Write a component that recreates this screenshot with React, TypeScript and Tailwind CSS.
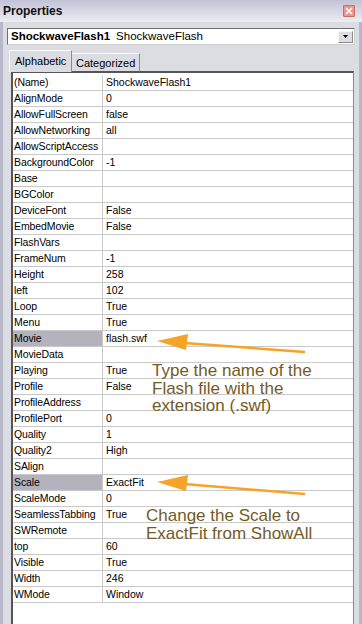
import React from 'react';

const rows: [string, string][] = [
  ['(Name)', 'ShockwaveFlash1'],
  ['AlignMode', '0'],
  ['AllowFullScreen', 'false'],
  ['AllowNetworking', 'all'],
  ['AllowScriptAccess', ''],
  ['BackgroundColor', '-1'],
  ['Base', ''],
  ['BGColor', ''],
  ['DeviceFont', 'False'],
  ['EmbedMovie', 'False'],
  ['FlashVars', ''],
  ['FrameNum', '-1'],
  ['Height', '258'],
  ['left', '102'],
  ['Loop', 'True'],
  ['Menu', 'True'],
  ['Movie', 'flash.swf'],
  ['MovieData', ''],
  ['Playing', 'True'],
  ['Profile', 'False'],
  ['ProfileAddress', ''],
  ['ProfilePort', '0'],
  ['Quality', '1'],
  ['Quality2', 'High'],
  ['SAlign', ''],
  ['Scale', 'ExactFit'],
  ['ScaleMode', '0'],
  ['SeamlessTabbing', 'True'],
  ['SWRemote', ''],
  ['top', '60'],
  ['Visible', 'True'],
  ['Width', '246'],
  ['WMode', 'Window'],
];

// rows the tutorial has selected
const selected = ['Movie', 'Scale'];

function PropertyRow({ name, value }: { name: string; value: string }) {
  const isSelected = selected.includes(name);
  return (
    <div className="flex h-[16px] border-b border-[#c9c9c9]">
      <div
        className={`w-[90px] shrink-0 overflow-hidden whitespace-nowrap border-r border-[#c9c9c9] pl-[1px] leading-[15px] tracking-[-0.1px] ${
          isSelected ? 'bg-[#b3b2bd]' : ''
        }`}
      >
        {name}
      </div>
      <div className="pl-[3px] leading-[15px]">{value}</div>
    </div>
  );
}

export default function App() {
  return (
    <div className="relative h-[624px] w-[362px] overflow-hidden bg-[#dcdce3] font-['Liberation_Sans',Arial,sans-serif] text-[11px] text-black">
      {/* title bar */}
      <div className="flex h-[22px] items-center justify-between bg-gradient-to-b from-[#c2c2d6] to-[#ededf3] pl-[3px] pr-[7px]">
        <span className="text-[12px] font-bold text-[#111]">Properties</span>
        <button className="flex h-[12px] w-[12px] items-center justify-center rounded-[1px] border border-[#c4706a] bg-[#ee9489]">
          <svg width="8" height="8" viewBox="0 0 8 8">
            <path d="M1 1 L7 7 M7 1 L1 7" stroke="white" strokeWidth="1.6" />
          </svg>
        </button>
      </div>

      <div className="flex h-[602px] flex-col border-x-[3px] border-[#b9b8cb] px-[4px] pt-[6px]">
        {/* object dropdown */}
        <div className="flex h-[17px] items-center justify-between border border-t-[#6f6f6f] border-l-[#6f6f6f] border-r-[#d0d0d0] border-b-[#d0d0d0] bg-white pl-[3px] pr-[1px]">
          <div className="flex items-center text-[11.5px] leading-[15px]">
            <span className="font-bold">ShockwaveFlash1</span>
            <span className="ml-[6px]">ShockwaveFlash</span>
          </div>
          <div className="flex h-[12px] w-[15px] items-center justify-center border border-t-[#f4f4f4] border-l-[#f4f4f4] border-r-[#8a8a8a] border-b-[#8a8a8a] bg-[#dedde3]">
            <svg width="5" height="3" viewBox="0 0 5 3">
              <path d="M0 0 H5 L2.5 3 Z" fill="black" />
            </svg>
          </div>
        </div>

        {/* tabs */}
        <div className="mt-[5px] flex items-end pl-[2px]">
          <div className="relative z-10 -mb-[1px] flex h-[22px] w-[63px] items-start border border-b-0 border-t-[#fafafa] border-l-[#fafafa] border-r-[#8c8c8c] bg-[#dcdce3] pl-[5px] pt-[3px] leading-[14px]">
            Alphabetic
          </div>
          <div className="flex h-[18px] w-[68px] items-start border border-b-0 border-l-0 border-t-[#fafafa] border-r-[#8c8c8c] pl-[4px] pt-[2px] leading-[14px]">
            Categorized
          </div>
        </div>

        {/* property grid */}
        <div className="ml-[4px] mr-[1px] flex-1 border-l-2 border-t-2 border-r border-l-[#555] border-t-[#555] border-r-[#8a8a8a] bg-white pt-[2px] text-[10.5px]">
          {rows.map(([name, value]) => (
            <PropertyRow key={name} name={name} value={value} />
          ))}
        </div>
      </div>

      {/* tutorial annotations */}
      <svg className="pointer-events-none absolute left-0 top-0" width="362" height="624">
        <line x1="184" y1="343" x2="305" y2="352" stroke="#f6a427" strokeWidth="2.5" />
        <polygon points="157,341 188,334 186,350" fill="#f6a427" />
        <line x1="184" y1="484" x2="305" y2="494" stroke="#f6a427" strokeWidth="2.5" />
        <polygon points="157,482 188,475 186,491" fill="#f6a427" />
      </svg>
      <div className="absolute left-[152px] top-[362px] text-[17px] leading-[17.5px] text-[#735b25]">
        Type the name of the
        <br />
        Flash file with the
        <br />
        extension (.swf)
      </div>
      <div className="absolute left-[146px] top-[507px] text-[17px] leading-[17.5px] text-[#735b25]">
        Change the Scale to
        <br />
        ExactFit from ShowAll
      </div>
    </div>
  );
}
